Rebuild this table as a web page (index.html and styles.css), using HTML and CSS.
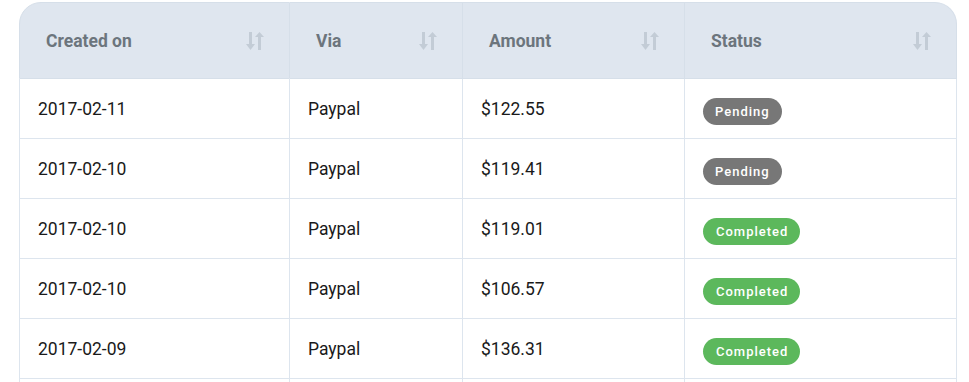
FILE: index.html
```html
<!DOCTYPE html>
<html>
<head>
<meta charset="utf-8">
<link rel="stylesheet" href="styles.css">
</head>
<body>
<div class="wrap">
<table class="grid">
  <colgroup>
    <col class="c1"><col class="c2"><col class="c3"><col class="c4">
  </colgroup>
  <thead>
    <tr>
      <th><div class="th-in"><span>Created on</span><svg class="sort" viewBox="0 0 18 18"><rect x="3" y="0" width="3" height="13"/><polygon points="0,12 9,12 4.5,18"/><polygon points="9,5 18,5 13.5,0"/><rect x="12" y="4" width="3" height="14"/></svg></div></th>
      <th><div class="th-in"><span>Via</span><svg class="sort" viewBox="0 0 18 18"><rect x="3" y="0" width="3" height="13"/><polygon points="0,12 9,12 4.5,18"/><polygon points="9,5 18,5 13.5,0"/><rect x="12" y="4" width="3" height="14"/></svg></div></th>
      <th><div class="th-in"><span>Amount</span><svg class="sort" viewBox="0 0 18 18"><rect x="3" y="0" width="3" height="13"/><polygon points="0,12 9,12 4.5,18"/><polygon points="9,5 18,5 13.5,0"/><rect x="12" y="4" width="3" height="14"/></svg></div></th>
      <th><div class="th-in"><span>Status</span><svg class="sort" viewBox="0 0 18 18"><rect x="3" y="0" width="3" height="13"/><polygon points="0,12 9,12 4.5,18"/><polygon points="9,5 18,5 13.5,0"/><rect x="12" y="4" width="3" height="14"/></svg></div></th>
    </tr>
  </thead>
  <tbody>
    <tr><td>2017-02-11</td><td>Paypal</td><td>$122.55</td><td class="st"><span class="badge pending">Pending</span></td></tr>
    <tr><td>2017-02-10</td><td>Paypal</td><td>$119.41</td><td class="st"><span class="badge pending">Pending</span></td></tr>
    <tr><td>2017-02-10</td><td>Paypal</td><td>$119.01</td><td class="st"><span class="badge done">Completed</span></td></tr>
    <tr><td>2017-02-10</td><td>Paypal</td><td>$106.57</td><td class="st"><span class="badge done">Completed</span></td></tr>
    <tr><td>2017-02-09</td><td>Paypal</td><td>$136.31</td><td class="st"><span class="badge done">Completed</span></td></tr>
    <tr><td></td><td></td><td></td><td></td></tr>
  </tbody>
</table>
</div>
</body>
</html>
```
FILE: styles.css
```css
html, body {
  margin: 0;
  padding: 0;
  background: #fff;
  overflow: hidden;
}
body {
  font-family: Roboto, "Liberation Sans", sans-serif;
}
.wrap {
  padding: 2px 12px 0 19px;
}
.grid {
  border-collapse: separate;
  border-spacing: 0;
  table-layout: fixed;
  width: 938px;
}
.c1 { width: 271px; }
.c2 { width: 173px; }
.c3 { width: 222px; }
.c4 { width: 272px; }
.grid th {
  background: #dfe6ef;
  height: 77px;
  padding: 0 25px 0 26px;
  text-align: left;
  font-size: 17.5px;
  font-weight: 700;
  color: #6c757d;
  border-top: 1px solid #d6dfe9;
  border-bottom: 1px solid #d6dfe9;
  border-right: 1px solid #d6dfe9;
  box-sizing: border-box;
}
.grid th:first-child {
  border-top-left-radius: 22px;
  border-left: 1px solid #d6dfe9;
}
.grid th:last-child {
  border-top-right-radius: 22px;
}
.th-in {
  display: flex;
  align-items: center;
  justify-content: space-between;
}
.sort {
  width: 18px;
  height: 18px;
  fill: #c3ccd6;
}
.grid td {
  height: 60px;
  padding: 0 18px;
  font-size: 17.5px;
  color: #1a1a1a;
  border-bottom: 1px solid #dde5ee;
  border-right: 1px solid #dde5ee;
  box-sizing: border-box;
}
.grid td:first-child {
  border-left: 1px solid #dde5ee;
}
.grid td.st {
  padding-top: 5px;
}
.badge {
  display: inline-block;
  height: 27px;
  line-height: 27px;
  padding: 0 12px;
  border-radius: 14px;
  font-size: 13px;
  font-weight: 500;
  letter-spacing: 1px;
  color: #fff;
}
.pending { background: #777777; }
.done { background: #5cb85c; padding: 0 12px 0 13px; }
```
